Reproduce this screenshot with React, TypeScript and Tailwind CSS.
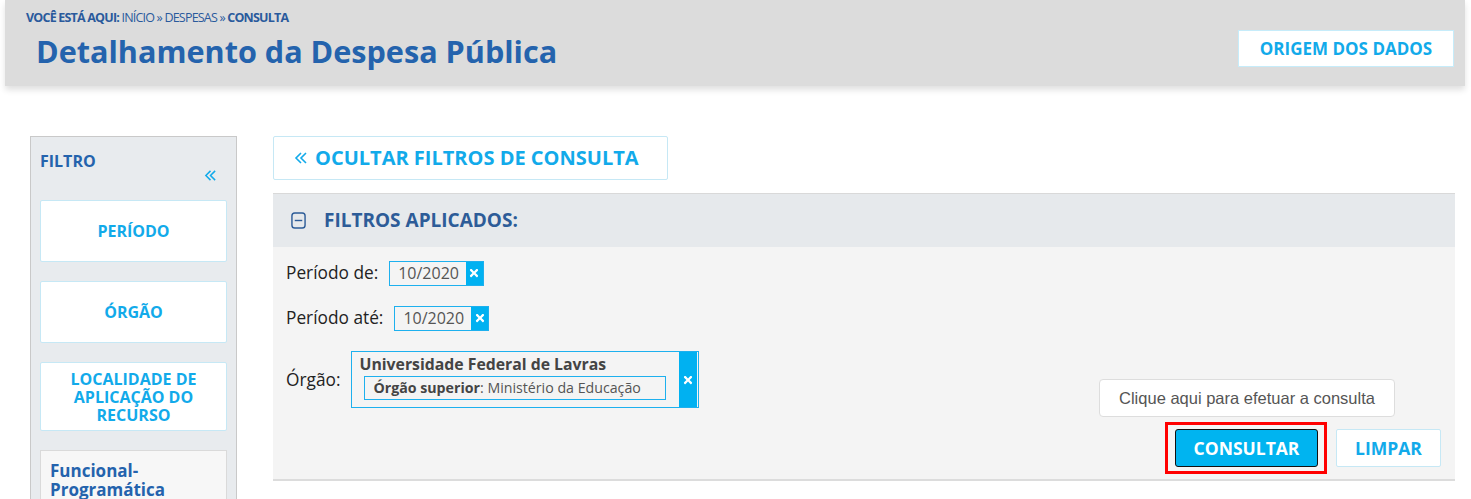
import React from "react";
import { FaTimes } from "react-icons/fa";

// double chevron, same shape as the « used by the portal
function DoubleChevron({ className }: { className?: string }) {
  return (
    <svg viewBox="0 0 14 14" className={className} fill="none" stroke="currentColor" strokeWidth={1.6}>
      <polyline points="7,2 2,7 7,12" />
      <polyline points="12,2 7,7 12,12" />
    </svg>
  );
}

function MinusBox() {
  return (
    <svg viewBox="0 0 16 18" className="w-[15px] h-[17px] text-[#2d5c98]" fill="none" stroke="currentColor" strokeWidth={1.5}>
      <rect x="1" y="1" width="14" height="16" rx="3" />
      <line x1="4" y1="9" x2="12" y2="9" />
    </svg>
  );
}

function Tag({ value }: { value: string }) {
  return (
    <div className="flex items-stretch h-[25px] border border-[#1db0ee]">
      <span className="pl-[8px] pr-[7px] text-[16px] leading-[23px] text-[#555]">{value}</span>
      <span className="w-[17px] bg-[#00b1f1] flex items-center justify-center">
        <FaTimes className="text-white w-[12px] h-[12px]" />
      </span>
    </div>
  );
}

const sideButtons = ["PERÍODO", "ÓRGÃO"];

export default function App() {
  return (
    <div className="min-h-screen bg-white font-['Open_Sans',sans-serif] overflow-hidden">
      {/* cabeçalho */}
      <header className="ml-[5px] w-[1460px] h-[86px] bg-[#dcdcdc] shadow-[0_4px_6px_rgba(0,0,0,0.12)] flex justify-between">
        <div className="pl-[21px] pt-[9px]">
          <p className="text-[12.5px] leading-[18px] tracking-[-0.8px] text-[#2a5a9c]">
            <span className="font-bold">VOCÊ ESTÁ AQUI:</span>{" "}
            <span>INÍCIO » DESPESAS »</span> <span className="font-bold">CONSULTA</span>
          </p>
          <h1 className="ml-[10px] mt-[4px] text-[30.6px] leading-[40px] font-bold text-[#2463ad]">
            Detalhamento da Despesa Pública
          </h1>
        </div>
        <div className="pt-[30px] pr-[11px]">
          <button className="w-[216px] h-[37px] bg-white border border-[#c6ecfa] text-[17px] font-bold text-[#12aaea]">
            ORIGEM DOS DADOS
          </button>
        </div>
      </header>

      <div className="flex pt-[50px] pl-[30px]">
        {/* barra lateral */}
        <aside className="w-[207px] h-[400px] shrink-0 bg-[#e8ebee] border border-[#c9c9c9] px-[9px] pt-[12px]">
          <div className="flex justify-between">
            <span className="text-[16px] font-bold text-[#2463ad] leading-[24px]">FILTRO</span>
            <DoubleChevron className="w-[13px] h-[13px] mt-[20px] mr-[10px] text-[#12aaea]" />
          </div>
          <div className="mt-[18px] flex flex-col gap-[19px]">
            {sideButtons.map((b) => (
              <div
                key={b}
                className="h-[62px] bg-white border border-[#c6e8f5] rounded-[2px] flex items-center justify-center text-[16px] font-bold text-[#12aaea]"
              >
                {b}
              </div>
            ))}
            <div className="h-[69px] bg-white border border-[#c6e8f5] rounded-[2px] flex items-center justify-center text-center text-[16px] leading-[18px] font-bold text-[#12aaea] px-[20px]">
              LOCALIDADE DE APLICAÇÃO DO RECURSO
            </div>
            <div className="h-[80px] bg-[#f7f7f7] border border-[#dadada] px-[9px] pt-[10px] text-[17px] leading-[19px] font-bold text-[#2463ad]">
              <div>Funcional-</div>
              <div>Programática</div>
            </div>
          </div>
        </aside>

        {/* conteúdo */}
        <main className="ml-[36px] w-[1182px]">
          <button className="h-[44px] w-[395px] bg-white border border-[#c6e8f5] rounded-[2px] flex items-center pl-[20px] text-[20px] font-bold text-[#12aaea]">
            <DoubleChevron className="w-[14px] h-[14px] mr-[7px]" />
            OCULTAR FILTROS DE CONSULTA
          </button>

          <section className="mt-[13px]">
            <div className="h-[54px] bg-[#e6e9ec] border-t border-[#d9d9d9] flex items-center pl-[18px] gap-[18px]">
              <MinusBox />
              <span className="text-[19px] font-bold text-[#2d5c98]">FILTROS APLICADOS:</span>
            </div>
            <div className="bg-[#f4f4f4] border-b-2 border-[#dcdcdc] flex justify-between pl-[13px] pr-[14px] pb-[5px]">
              <div className="pt-[13px] flex flex-col text-[17.3px] text-[#222]">
                <div className="flex items-center gap-[11px] h-[26px]">
                  <span>Período de:</span>
                  <Tag value="10/2020" />
                </div>
                <div className="flex items-center gap-[11px] h-[26px] mt-[19px]">
                  <span>Período até:</span>
                  <Tag value="10/2020" />
                </div>
                <div className="flex items-center gap-[11px] mt-[20px]">
                  <span>Órgão:</span>
                  <div className="flex h-[57px] w-[348px] border border-[#1db0ee]">
                    <div className="flex-1 pl-[7px] pt-[2px]">
                      <div className="text-[15.8px] leading-[20px] font-bold text-[#444]">
                        Universidade Federal de Lavras
                      </div>
                      <div className="ml-[5px] mt-[2px] w-[302px] h-[24px] border border-[#1db0ee] pl-[8px] text-[14.2px] leading-[22px] text-[#555]">
                        <span className="font-bold text-[#444]">Órgão superior</span>: Ministério da Educação
                      </div>
                    </div>
                    <div className="w-[18px] bg-[#00b1f1] mr-[1px] flex items-center justify-center">
                      <FaTimes className="text-white w-[12px] h-[12px]" />
                    </div>
                  </div>
                </div>
                <div className="h-[66px]" />
              </div>

              <div className="flex flex-col items-end justify-end">
                <div className="mr-[46px] w-[296px] h-[38px] bg-white border border-[#dddddd] rounded-[4px] flex items-center justify-center font-['Liberation_Sans',sans-serif] text-[16.5px] text-[#555]">
                  Clique aqui para efetuar a consulta
                </div>
                <div className="mt-[5px] flex items-center gap-[9px]">
                  <div className="border-[3px] border-[#ff0000] pl-[7px] pr-[6px] py-[4px]">
                    <button className="w-[143px] h-[38px] bg-[#00b4f0] border border-[#111] rounded-[3px] text-[17.5px] font-bold text-white">
                      CONSULTAR
                    </button>
                  </div>
                  <button className="w-[105px] h-[38px] bg-white border border-[#c6e8f5] rounded-[2px] text-[17.5px] font-bold text-[#12aaea]">
                    LIMPAR
                  </button>
                </div>
              </div>
            </div>
          </section>
        </main>
      </div>
    </div>
  );
}
